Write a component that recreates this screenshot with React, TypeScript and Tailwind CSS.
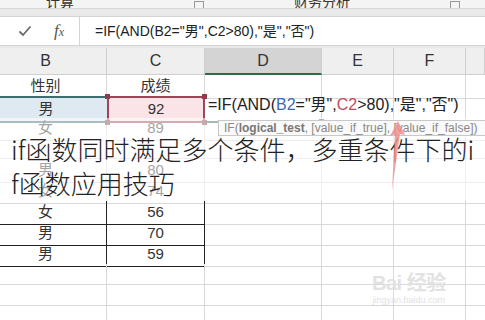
import React from "react";

const font = { fontFamily: '"Liberation Sans", "Noto Sans CJK SC", sans-serif' };

const cols = ["B", "C", "D", "E", "F", ""];

const rows: [string, string][] = [
  ["性别", "成绩"],
  ["男", "92"],
  ["女", "89"],
  ["", ""],
  ["男", "80"],
  ["女", "74"],
  ["女", "56"],
  ["男", "70"],
  ["男", "59"],
  ["", ""],
  ["", ""],
  ["", ""],
];

const grid = "grid grid-cols-[107px_98px_117px_72px_72px_1fr]";

const Handle = ({ className }: { className: string }) => (
  <span className={`absolute h-[5px] w-[5px] bg-[#8e3c4c] ${className}`} />
);

function Row({ b, c, i }: { b: string; c: string; i: number }) {
  const boxed = i >= 6 && i <= 8;
  const line = boxed ? "border-[#222]" : "border-[#d9d9d9]";

  if (i === 1) {
    return (
      <div className={`${grid} h-[21px] text-[15px] text-[#333]`}>
        <div className="flex items-center justify-center border-y-2 border-[#3e6d70] bg-[#dfe9f2] pr-[15px]">
          {b}
        </div>
        <div className="relative flex items-center justify-center border-2 border-[#9c4757] bg-[#fbe4e7]">
          {c}
          <Handle className="-left-[4px] -top-[4px]" />
          <Handle className="-right-[4px] -top-[4px]" />
          <Handle className="-bottom-[4px] -left-[4px]" />
          <Handle className="-bottom-[4px] -right-[4px]" />
        </div>
        <div className="relative border-b-2 border-r border-b-[#2e6b46] border-r-[#d9d9d9]">
          <span className="absolute left-[3px] -top-[1px] z-10 whitespace-nowrap text-[16px] leading-[20px] text-[#222]">
            =IF(AND(<span className="text-[#3f67b8]">B2</span>=&quot;男&quot;,
            <span className="text-[#c24b5a]">C2</span>&gt;80),&quot;是&quot;,&quot;否&quot;)
          </span>
          <span className="absolute -bottom-[3px] -right-[3px] h-[5px] w-[5px] bg-[#2e6b46]" />
        </div>
        <div className="border-b border-r border-[#d9d9d9]" />
        <div className="border-b border-r border-[#d9d9d9]" />
        <div className="border-b border-[#d9d9d9]" />
      </div>
    );
  }

  return (
    <div className={`${grid} h-[21px] text-[15px] text-[#333]`}>
      <div className={`flex items-center justify-center border-b border-r pr-[15px] ${line}`}>{b}</div>
      <div className={`flex items-center justify-center border-b border-r ${line}`}>{c}</div>
      <div className="border-b border-r border-[#d9d9d9]" />
      <div className="border-b border-r border-[#d9d9d9]" />
      <div className="border-b border-r border-[#d9d9d9]" />
      <div className="border-b border-[#d9d9d9]" />
    </div>
  );
}

export default function App() {
  return (
    <div className="relative h-[320px] w-[485px] overflow-hidden bg-white" style={font}>
      {/* ribbon remnants */}
      <div className="flex h-[9px] items-end overflow-hidden border-b border-[#d6d6d6] bg-[#f4f4f4] text-[14px] leading-[16px] text-[#333]">
        <span className="ml-[46px] -mb-[2px]">计算</span>
        <span className="ml-[120px] -mb-[3px] h-[10px] w-[10px] border border-[#999]" />
        <span className="ml-[90px] -mb-[2px]">财务分析</span>
        <span className="ml-[100px] -mb-[3px] h-[10px] w-[10px] border border-[#999]" />
      </div>
      <div className="h-[7px] bg-[#e9e9e9]" />

      {/* formula bar */}
      <div className="flex h-[30px] items-center border-y border-[#d4d4d4] bg-white">
        <div className="flex h-full w-[80px] items-center border-r border-[#d4d4d4]">
          <svg className="ml-[18px]" width="14" height="12" viewBox="0 0 14 12">
            <path d="M1.5 6.5 L5 10 L12.5 1.5" fill="none" stroke="#6b6b6b" strokeWidth="1.8" />
          </svg>
          <span
            className="ml-[22px] text-[17px] italic text-[#555]"
            style={{ fontFamily: '"Liberation Serif", serif' }}
          >
            f<span className="text-[12px]">x</span>
          </span>
        </div>
        <span className="ml-[15px] whitespace-nowrap text-[14px] text-[#222]">
          =IF(AND(B2=&quot;男&quot;,C2&gt;80),&quot;是&quot;,&quot;否&quot;)
        </span>
      </div>
      <div className="h-[2px] bg-[#e9e9e9]" />

      {/* column headers */}
      <div className={`${grid} h-[27px] bg-[#efefef] text-[16px] text-[#333]`}>
        {cols.map((c, i) => (
          <div
            key={i}
            className={`flex items-center justify-center border-r border-[#cfcfcf] ${
              i === 0 ? "pr-[15px]" : ""
            } ${c === "D" ? "border-b-2 border-b-[#2e6b46] bg-[#d4d4d4]" : "border-b border-b-[#cfcfcf]"}`}
          >
            {c}
          </div>
        ))}
      </div>

      {rows.map(([b, c], i) => (
        <Row key={i} b={b} c={c} i={i} />
      ))}

      {/* caption band */}
      <div className="absolute left-0 top-[118px] z-20 h-[83px] w-full bg-white/55" />

      {/* function tooltip */}
      <div className="absolute left-[218px] top-[120px] z-20 flex h-[16px] w-[280px] items-center border border-[#c8c8c8] bg-[#fafafa] pl-[5px] text-[12px] whitespace-nowrap text-[#888]">
        IF(<b className="text-[#777]">logical_test</b>, [value_if_true], [value_if_false])
      </div>

      <div
        className="absolute left-[11px] top-[132px] z-30 text-[26px] font-light leading-[34px] text-[#222]"
        style={{ fontFamily: '"Noto Sans CJK SC", "Liberation Sans", sans-serif' }}
      >
        <div className="whitespace-nowrap">if函数同时满足多个条件，多重条件下的i</div>
        <div className="whitespace-nowrap">f函数应用技巧</div>
      </div>

      {/* pointer arrow */}
      <svg className="absolute left-0 top-0 z-40" width="485" height="320" viewBox="0 0 485 320">
        <polygon
          points="398,121 405,135 400,134 392,190 395,134 390,136"
          fill="#ee8f8f"
          fillOpacity="0.85"
        />
      </svg>

      {/* watermark */}
      <div className="absolute left-[372px] top-[272px] z-40 flex flex-col items-center text-[#e2e2e2]">
        <span className="text-[20px] font-bold leading-[22px] tracking-tight">Bai 经验</span>
        <span className="text-[9px] leading-[12px]">jingyan.baidu.com</span>
      </div>
    </div>
  );
}
